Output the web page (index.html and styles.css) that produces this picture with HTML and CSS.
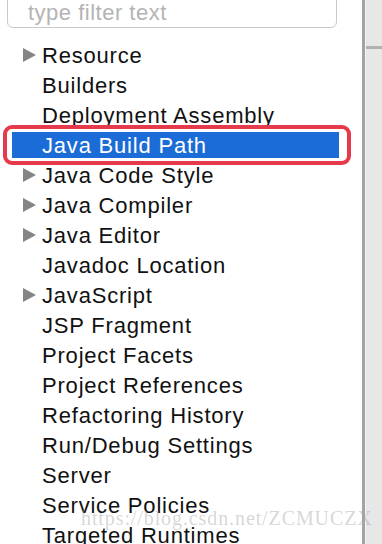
FILE: index.html
```html
<!DOCTYPE html>
<html lang="en">
<head>
    <meta charset="UTF-8">
    <title>Properties</title>
    <link rel="stylesheet" href="styles.css">
</head>
<body>
    <div id="window">
        <div id="left">
            <div class="filter">type filter text</div>
            <ul id="tree">
                <li class="item"><span class="arrow"></span>Resource</li>
                <li class="item">Builders</li>
                <li class="item">Deployment Assembly</li>
                <li class="item selected">Java Build Path</li>
                <li class="item"><span class="arrow"></span>Java Code Style</li>
                <li class="item"><span class="arrow"></span>Java Compiler</li>
                <li class="item"><span class="arrow"></span>Java Editor</li>
                <li class="item">Javadoc Location</li>
                <li class="item"><span class="arrow"></span>JavaScript</li>
                <li class="item">JSP Fragment</li>
                <li class="item">Project Facets</li>
                <li class="item">Project References</li>
                <li class="item">Refactoring History</li>
                <li class="item">Run/Debug Settings</li>
                <li class="item">Server</li>
                <li class="item">Service Policies</li>
                <li class="item">Targeted Runtimes</li>
            </ul>
            <div id="mark"></div>
        </div>
        <div id="sash"></div>
        <div id="right">
            <div class="top"></div>
        </div>
    </div>
    <div id="watermark">https://blog.csdn.net/ZCMUCZX</div>
</body>
</html>
```

FILE: styles.css
```css
*{
    margin: 0;
    padding: 0;
}
body{
    background: #fff;
    font-family: "Liberation Sans", Arial, sans-serif;
    overflow: hidden;
    width: 382px;
    height: 544px;
    position: relative;
}
#window{
    display: flex;
    height: 544px;
}
#left{
    width: 362px;
    position: relative;
}
.filter{
    margin: -10px 0 0 7px;
    height: 38px;
    border: 1px solid #c9c9c9;
    border-radius: 6px;
    padding-left: 20px;
    box-sizing: border-box;
    width: 330px;
    color: #b4b4b4;
    font-size: 22px;
    letter-spacing: 0.5px;
    line-height: 44px;
}
#tree{
    margin-top: 12px;
}
li{
    list-style: none;
}
#tree .item{
    height: 30px;
    line-height: 32px;
    font-size: 22px;
    letter-spacing: 0.8px;
    color: #111;
    position: relative;
    margin: 0 23px 0 12px;
    padding-left: 30px;
}
#tree .arrow{
    position: absolute;
    left: 11px;
    top: 8px;
    width: 0;
    height: 0;
    border-top: 7px solid transparent;
    border-bottom: 7px solid transparent;
    border-left: 13px solid #858585;
}
#tree .selected{
    background: #1b6cd7;
    color: #fff;
    height: 26px;
    line-height: 28px;
    margin-top: 2px;
    margin-bottom: 2px;
}
#mark{
    position: absolute;
    left: 3px;
    top: 125px;
    width: 348px;
    height: 40px;
    border: 4.5px solid #e63a4a;
    border-radius: 9px;
    box-sizing: border-box;
}
#sash{
    width: 3px;
    background: #a3a3a3;
}
#right{
    flex: 1;
    background: #e7e7e7;
    border-left: 1px solid #f4f4f4;
}
#right .top{
    height: 46px;
    border-bottom: 3px solid #b1b1b1;
}
#watermark{
    position: absolute;
    left: 81px;
    top: 507px;
    font-family: "Liberation Serif", serif;
    font-size: 20px;
    letter-spacing: 0.9px;
    color: rgba(165,165,165,0.45);
    white-space: nowrap;
}
```
